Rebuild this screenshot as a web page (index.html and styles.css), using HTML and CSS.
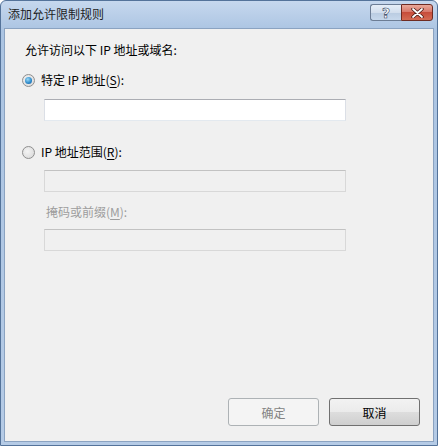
FILE: index.html
```html
<!DOCTYPE html>
<html lang="zh-CN">
<head>
<meta charset="utf-8">
<title>添加允许限制规则</title>
<link rel="stylesheet" href="styles.css">
</head>
<body>
<div class="window">
  <div class="titlebar">
    <span class="title">添加允许限制规则</span>
    <div class="caption-buttons">
      <span class="cap-btn help">?</span>
      <span class="cap-btn close">
        <svg width="13" height="10" viewBox="0 0 13 10"><path d="M2 1 L11 9 M11 1 L2 9" stroke="#4a1b14" stroke-width="3.4" stroke-linecap="round"/><path d="M2 1 L11 9 M11 1 L2 9" stroke="#ffffff" stroke-width="1.8" stroke-linecap="round"/></svg>
      </span>
    </div>
  </div>
  <div class="client">
    <div class="content">
      <div class="intro">允许访问以下 IP 地址或域名:</div>
      <label class="radio-row">
        <span class="radio checked"></span>
        <span>特定 IP 地址(<u>S</u>):</span>
      </label>
      <div class="field"></div>
      <label class="radio-row second">
        <span class="radio"></span>
        <span>IP 地址范围(<u>R</u>):</span>
      </label>
      <div class="field disabled"></div>
      <div class="sublabel">掩码或前缀(<u>M</u>):</div>
      <div class="field disabled"></div>
    </div>
    <div class="actions">
      <button class="btn" disabled>确定</button>
      <button class="btn primary">取消</button>
    </div>
  </div>
</div>
</body>
</html>
```
FILE: styles.css
```css
html, body {
  margin: 0;
  padding: 0;
  background: #ffffff;
}
body {
  width: 438px;
  height: 446px;
  font-family: "Noto Sans CJK SC", "Noto Sans", sans-serif;
  font-size: 12px;
  color: #000;
}
.window {
  box-sizing: border-box;
  width: 438px;
  height: 446px;
  border: 1px solid #54739a;
  border-radius: 6px 6px 0 0;
  background: linear-gradient(#c6d8ee, #abc4e2 30px, #b5cbe6);
  padding: 0 3px 3px 3px;
  display: flex;
  flex-direction: column;
}
.titlebar {
  height: 27px;
  display: flex;
  align-items: flex-start;
  justify-content: space-between;
  flex: none;
}
.title {
  margin-top: 5px;
  margin-left: 4px;
  font-size: 12px;
  color: #1e1e1e;
  line-height: 16px;
}
.caption-buttons {
  display: flex;
  margin-top: 3px;
  margin-right: 1px;
}
.cap-btn {
  box-sizing: border-box;
  width: 32px;
  height: 17px;
  border: 1px solid #6c7d95;
  display: flex;
  align-items: center;
  justify-content: center;
}
.help {
  border-radius: 3px 0 0 3px;
  border-right: none;
  background: linear-gradient(#e6eef8, #d2deed 50%, #b9cbe1 51%, #c7d8ec);
  font-family: "DejaVu Sans", sans-serif;
  font-weight: bold;
  font-size: 14px;
  line-height: 14px;
  color: #ffffff;
  -webkit-text-stroke: 0.6px #33445e;
  width: 31px;
}
.close {
  border-radius: 0 3px 3px 0;
  border-color: #6e2b22;
  background: linear-gradient(#e9a99a, #d8786a 45%, #c74d3b 50%, #d46b53);
}
.client {
  flex: 1;
  background: #f0f0f0;
  border: 1px solid #8ba3c1;
  display: flex;
  flex-direction: column;
  justify-content: space-between;
}
.content {
  padding: 13px 0 0 20px;
  display: flex;
  flex-direction: column;
}
.intro {
  line-height: 16px;
}
.radio-row {
  display: flex;
  align-items: center;
  margin-top: 14px;
  line-height: 16px;
}
.radio-row.second {
  margin-top: 23px;
}
.radio {
  box-sizing: border-box;
  width: 13px;
  height: 13px;
  border-radius: 50%;
  border: 1px solid #8f8f8f;
  background: radial-gradient(circle at 40% 40%, #f4f4f4, #d6d6d6);
  margin-left: -3px;
  margin-right: 6px;
  position: relative;
}
.radio.checked::after {
  content: "";
  position: absolute;
  left: 2px;
  top: 2px;
  width: 7px;
  height: 7px;
  border-radius: 50%;
  background: radial-gradient(circle at 40% 35%, #9ad9f7, #2a88c8 60%, #15539a);
}
.field {
  box-sizing: border-box;
  width: 302px;
  height: 22px;
  margin-left: 19px;
  margin-top: 11px;
  background: #ffffff;
  border: 1px solid #dbdfe6;
  border-top-color: #abadb3;
  border-bottom-color: #e3e9ef;
}
.field.disabled {
  background: #f0f0f0;
  border-color: #d8d8d8;
  border-top-color: #c2c2c2;
}
.radio-row.second + .field {
  margin-top: 10px;
}
.sublabel {
  margin-top: 12px;
  margin-left: 21px;
  color: #9d9d9d;
  line-height: 16px;
}
.sublabel + .field {
  margin-top: 9px;
}
.actions {
  display: flex;
  justify-content: flex-end;
  gap: 10px;
  padding: 0 13px 15px 0;
}
.btn {
  box-sizing: border-box;
  width: 91px;
  height: 28px;
  font-family: "Noto Sans CJK SC", "Noto Sans", sans-serif;
  font-size: 12px;
  border: 1px solid #707070;
  border-radius: 3px;
  background: linear-gradient(#f2f2f2, #ebebeb 50%, #dddddd 51%, #cfcfcf);
  color: #000;
  padding: 0;
}
.btn:disabled {
  border-color: #adb2b5;
  background: #f4f4f4;
  color: #838383;
}
u {
  text-decoration: underline;
  text-underline-offset: 2px;
}
```
